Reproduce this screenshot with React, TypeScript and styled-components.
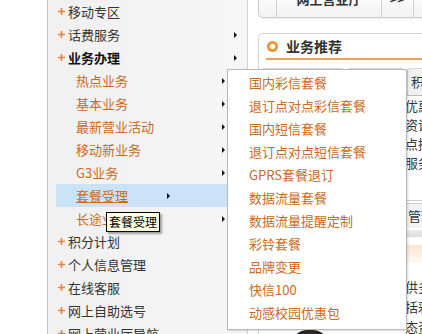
import React from "react";
import styled, { createGlobalStyle } from "styled-components";

type MenuItem = {
  label: string;
  arrow?: boolean;
  bold?: boolean;
  sub?: boolean;
  active?: boolean;
};

const menu: MenuItem[] = [
  { label: "移动专区" },
  { label: "话费服务", arrow: true },
  { label: "业务办理", arrow: true, bold: true },
  { label: "热点业务", sub: true, arrow: true },
  { label: "基本业务", sub: true, arrow: true },
  { label: "最新营业活动", sub: true, arrow: true },
  { label: "移动新业务", sub: true, arrow: true },
  { label: "G3业务", sub: true, arrow: true },
  { label: "套餐受理", sub: true, arrow: true, active: true },
  { label: "长途业务", sub: true, arrow: true },
  { label: "积分计划", arrow: true },
  { label: "个人信息管理", arrow: true },
  { label: "在线客服", arrow: true },
  { label: "网上自助选号", arrow: true },
  { label: "网上营业厅导航" },
];

const packages = [
  "国内彩信套餐",
  "退订点对点彩信套餐",
  "国内短信套餐",
  "退订点对点短信套餐",
  "GPRS套餐退订",
  "数据流量套餐",
  "数据流量提醒定制",
  "彩铃套餐",
  "品牌变更",
  "快信100",
  "动感校园优惠包",
];

const Plus = () => (
  <PlusIcon width="7" height="7" viewBox="0 0 7 7">
    <path d="M0 3.5H7M3.5 0V7" stroke="#e3843a" strokeWidth="1.6" />
  </PlusIcon>
);

const App: React.FC = () => {
  return (
    <>
      <GlobalStyle />
      <Page>
        <Sidebar>
          {menu.map((item) =>
            item.sub ? (
              <SubRow key={item.label} $active={item.active}>
                <SubLabel $active={item.active}>{item.label}</SubLabel>
                {item.arrow && <Arrow $inline={item.active} />}
              </SubRow>
            ) : (
              <MenuRow key={item.label} $bold={item.bold}>
                <Plus />
                <span>{item.label}</span>
                {item.arrow && <Arrow />}
              </MenuRow>
            )
          )}
        </Sidebar>

        <Main>
          <TopBar>
            <TopCell $w={17} />
            <TopCell $w={104}>网上营业厅</TopCell>
            <TopCell $w={31}>&gt;&gt;</TopCell>
            <TopCell $w={40} />
          </TopBar>

          <Panel>
            <PanelHead>
              <Ring />
              <PanelTitle>业务推荐</PanelTitle>
            </PanelHead>
            <Tabs>
              <Tab $w={83}>热门推荐</Tab>
              <Tab $w={57}>新业务</Tab>
              <Tab $w={60} $left>积分兑换</Tab>
            </Tabs>
            <PanelBody>
              <LeftCol>
                <PromoRow>
                  <Photo />
                  <PromoTitle>动感地带</PromoTitle>
                </PromoRow>
              </LeftCol>
              <RightCol>
                <TextLines>
                  <div>优惠活动</div>
                  <div>资讯动态</div>
                  <div>点播推荐</div>
                  <div>服务指南</div>
                </TextLines>
                <Divider />
                <SubTab>管理中心</SubTab>
                <GrayBar />
                <PeachBar />
                <TextLines $lh={20} $top={14}>
                  <div>供多种套餐</div>
                  <div>括彩信业务</div>
                  <div>态资讯服务</div>
                </TextLines>
              </RightCol>
            </PanelBody>
          </Panel>
        </Main>

        <Popup>
          {packages.map((p) => (
            <PopupItem key={p}>{p}</PopupItem>
          ))}
        </Popup>

        <Tooltip>套餐受理</Tooltip>
      </Page>
    </>
  );
};

export default App;

const GlobalStyle = createGlobalStyle`
  html, body {
    margin: 0;
    padding: 0;
    background: #fff;
  }
  body {
    font-family: "Noto Sans CJK SC", "Noto Sans", sans-serif;
    font-size: 13px;
    color: #333;
  }
`;

const Page = styled.div`
  position: relative;
  width: 422px;
  height: 334px;
  overflow: hidden;
  display: flex;
  align-items: flex-start;
  background: #fff;
`;

const Sidebar = styled.div`
  margin-left: 47px;
  width: 199px;
  height: 334px;
  flex-shrink: 0;
  overflow: hidden;
  border-left: 1px solid #c4c4c4;
  border-right: 1px solid #d4d4d4;
  background: linear-gradient(to right, #f0f0f0, #f6f6f6);
`;

const MenuRow = styled.div<{ $bold?: boolean }>`
  height: 23px;
  display: flex;
  align-items: center;
  padding-left: 10px;
  padding-right: 10px;
  color: ${(p) => (p.$bold ? "#111" : "#333")};
  font-weight: ${(p) => (p.$bold ? 700 : 400)};
  white-space: nowrap;
`;

const PlusIcon = styled.svg`
  flex-shrink: 0;
  margin-right: 3px;
`;

const SubRow = styled.div<{ $active?: boolean }>`
  height: 23px;
  width: 171px;
  margin-left: 8px;
  padding-left: 20px;
  padding-right: 2px;
  box-sizing: border-box;
  display: flex;
  align-items: center;
  background: ${(p) => (p.$active ? "#cbe3f8" : "transparent")};
  white-space: nowrap;
`;

const SubLabel = styled.span<{ $active?: boolean }>`
  color: #c96a1e;
  text-decoration: ${(p) => (p.$active ? "underline" : "none")};
`;

const Arrow = styled.i<{ $inline?: boolean }>`
  display: block;
  width: 0;
  height: 0;
  margin-left: ${(p) => (p.$inline ? "39px" : "auto")};
  border-left: 3px solid #111;
  border-top: 3px solid transparent;
  border-bottom: 3px solid transparent;
`;

const Main = styled.div`
  margin-left: 10px;
  width: 200px;
  flex-shrink: 0;
  display: flex;
  flex-direction: column;
`;

const TopBar = styled.div`
  margin-top: -13px;
  height: 29px;
  display: flex;
  border: 1px solid #cdcdcd;
  border-right: none;
  border-radius: 0 0 0 5px;
  background: linear-gradient(#ffffff, #f2f2f2);
  box-shadow: 0 1px 1px rgba(0, 0, 0, 0.08);
`;

const TopCell = styled.div<{ $w: number }>`
  width: ${(p) => p.$w}px;
  flex-shrink: 0;
  border-right: 1px solid #d0d0d0;
  line-height: 22px;
  text-align: center;
  font-weight: 700;
  color: #333;
`;

const Panel = styled.div`
  margin-top: 15px;
  height: 310px;
  border: 1px solid #d3d3d3;
  border-right: none;
  border-bottom: none;
  border-radius: 5px 0 0 0;
`;

const PanelHead = styled.div`
  height: 24px;
  margin-left: 7px;
  padding-left: 1px;
  display: flex;
  align-items: center;
  gap: 8px;
  border-bottom: 2px solid #eea24e;
`;

const Ring = styled.span`
  width: 11px;
  height: 11px;
  border-radius: 50%;
  background: radial-gradient(
    circle,
    #fff 0 2px,
    #fbc27a 2.5px,
    #e8841f 4.5px,
    #f0a050 5.5px
  );
`;

const PanelTitle = styled.span`
  font-size: 14px;
  font-weight: 700;
  color: #333;
`;

const Tabs = styled.div`
  margin-top: 8px;
  padding-left: 2px;
  display: flex;
  gap: 3px;
  border-bottom: 1px solid #bcbcbc;
`;

const Tab = styled.div<{ $w: number; $left?: boolean }>`
  width: ${(p) => p.$w}px;
  height: 27px;
  flex-shrink: 0;
  box-sizing: border-box;
  border: 1px solid #d8d8d8;
  border-bottom: none;
  border-radius: 3px 3px 0 0;
  background: #f1f1f1;
  line-height: 26px;
  padding-left: ${(p) => (p.$left ? "3px" : "0")};
  text-align: ${(p) => (p.$left ? "left" : "center")};
  white-space: nowrap;
  overflow: hidden;
`;

const PanelBody = styled.div`
  display: flex;
`;

const LeftCol = styled.div`
  width: 146px;
  flex-shrink: 0;
  padding-top: 234px;
`;

const PromoRow = styled.div`
  display: flex;
  align-items: flex-start;
  gap: 18px;
  padding-left: 31px;
`;

const Photo = styled.div`
  width: 40px;
  height: 40px;
  border-radius: 18px 18px 4px 4px;
  background: radial-gradient(ellipse at 50% 20%, #3a2e28, #15100e 70%);
`;

const PromoTitle = styled.div`
  margin-top: 1px;
  font-weight: 700;
  color: #222;
  white-space: nowrap;
`;

const RightCol = styled.div`
  flex: 1;
  white-space: nowrap;
  overflow: hidden;
`;

const TextLines = styled.div<{ $lh?: number; $top?: number }>`
  margin-top: ${(p) => p.$top ?? 0}px;
  line-height: ${(p) => p.$lh ?? 19}px;
  color: #333;
`;

const Divider = styled.div`
  margin-top: 28px;
  height: 2px;
  border-top: 1px solid #cfcfcf;
  border-bottom: 1px solid #cfcfcf;
`;

const SubTab = styled.div`
  height: 24px;
  line-height: 24px;
  padding-left: 3px;
  background: #f3f3f3;
`;

const GrayBar = styled.div`
  margin-top: 2px;
  height: 7px;
  background: linear-gradient(#ececec, #dcdcdc);
`;

const PeachBar = styled.div`
  margin-top: 8px;
  height: 18px;
  background: linear-gradient(#fde6d0, #fffaf5);
`;

const Popup = styled.div`
  position: absolute;
  left: 227px;
  top: 69px;
  width: 180px;
  height: 261px;
  box-sizing: border-box;
  padding-top: 1px;
  background: #fff;
  border: 1px solid #b8b8b8;
  box-shadow: 1px 1px 2px rgba(0, 0, 0, 0.15);
`;

const PopupItem = styled.div`
  height: 23px;
  line-height: 23px;
  padding-left: 21px;
  color: #c96a1e;
  white-space: nowrap;
`;

const Tooltip = styled.div`
  position: absolute;
  left: 106px;
  top: 212px;
  height: 20px;
  box-sizing: border-box;
  padding: 0 2px;
  border: 1px solid #000;
  background: #ffffe1;
  color: #000;
  font-size: 12px;
  line-height: 18px;
  box-shadow: 2px 2px 2px rgba(0, 0, 0, 0.35);
  white-space: nowrap;
`;
